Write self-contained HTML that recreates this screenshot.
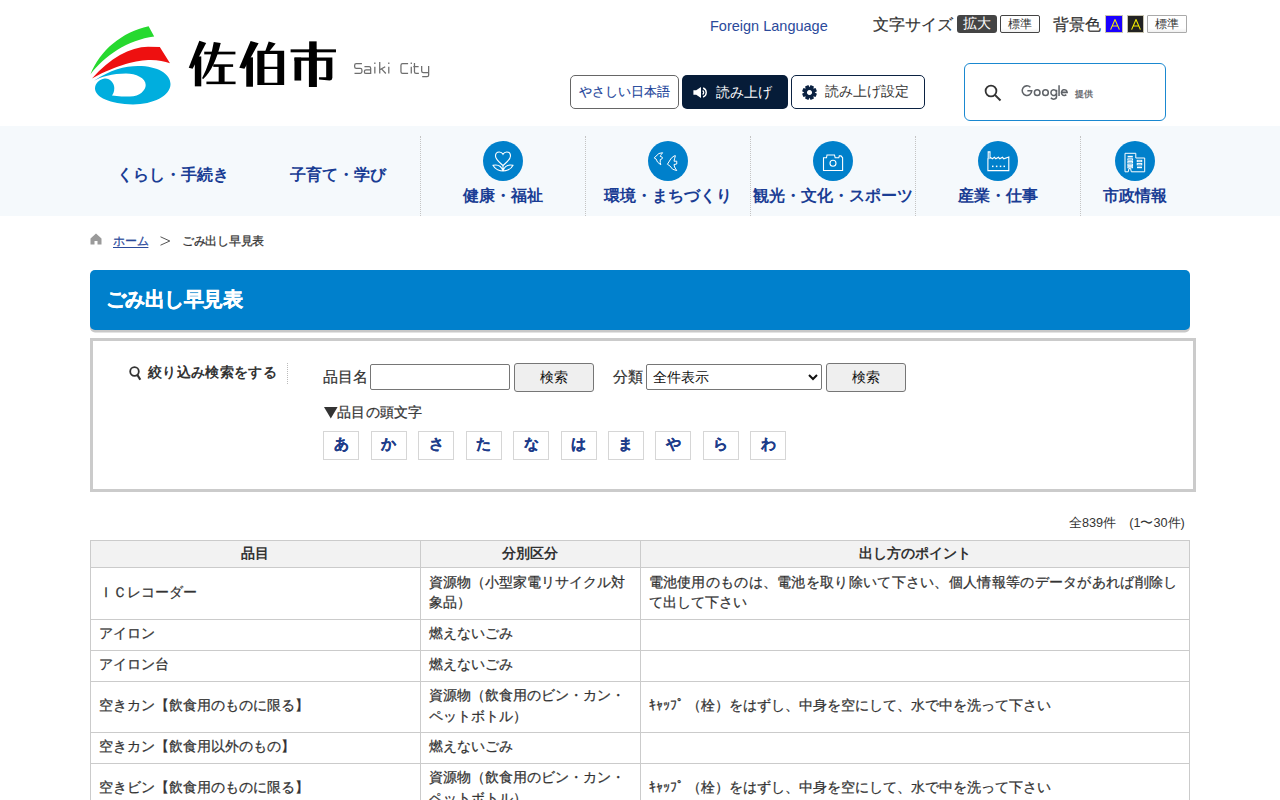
<!DOCTYPE html>
<html lang="ja">
<head>
<meta charset="utf-8">
<title>ごみ出し早見表 - 佐伯市</title>
<style>
*{box-sizing:border-box;margin:0;padding:0}
html,body{width:1280px;height:800px;overflow:hidden;background:#fff}
body{font-family:"Liberation Sans",sans-serif;color:#333;position:relative}
.abs{position:absolute}
.nowrap{white-space:nowrap}
/* header */
#logo{left:88px;top:22px;width:86px;height:86px}
#cityname{left:191px;top:37px;font-size:48px;font-weight:bold;color:#111;line-height:60px;letter-spacing:1px;transform:scaleY(0.92);transform-origin:0 0;-webkit-text-stroke:0.5px #111}
#saiki{left:354px;top:58px;font-size:16px;color:#777;letter-spacing:0.5px;line-height:20px}
#foreign{left:710px;top:17px;font-size:14.5px;color:#2b4a9b;line-height:18px}
#fsize{left:873px;top:15px;font-size:16px;color:#333;line-height:20px;-webkit-text-stroke:0.2px #333}
.tbtn{position:absolute;height:17.5px;font-size:12.5px;line-height:16px;text-align:center;border-radius:3px}
.btn1{left:570px;top:75px;width:109px;height:34px;border:1px solid #666;border-radius:5px;font-size:13px;color:#21439a;line-height:32px;text-align:center;-webkit-text-stroke:0.15px #21439a}
.btn2{left:682px;top:75px;width:106px;height:34px;background:#061c38;border-radius:5px;font-size:14px;color:#fff;line-height:34px}
.btn3{left:791px;top:75px;width:134px;height:34px;border:1.5px solid #0b2242;border-radius:5px;font-size:14px;color:#333;line-height:31px}
#gsearch{left:964px;top:63px;width:202px;height:58px;border:1.5px solid #1a88d0;border-radius:6px}
/* nav */
#nav{left:0;top:126px;width:1280px;height:90px;background:#f5f9fc}
.ncol{position:absolute;top:0;height:90px;text-align:center;color:#1a3d94;font-weight:bold;font-size:16px}
.ndiv{position:absolute;top:10px;height:80px;width:0;border-left:1px dotted #c4c4c4}
.ncirc{position:absolute;top:14.5px;left:50%;margin-left:-20px;width:40px;height:40px;border-radius:50%;background:#0080cb}
.nlab{position:absolute;left:0;right:0;top:58px;line-height:24px;white-space:nowrap}
.nlab2{position:absolute;left:0;right:0;top:37px;line-height:24px;white-space:nowrap}
/* breadcrumb */
#bc{left:90px;top:231px;font-size:12px;line-height:20px;color:#333;-webkit-text-stroke:0.25px}
/* title */
#title{left:90px;top:270px;width:1100px;height:60px;background:#0080cc;border-radius:5px;box-shadow:0 2.5px 0 #c8c8c8;color:#fff;font-size:19.8px;font-weight:bold;line-height:58px;padding-left:15.5px;letter-spacing:-0.5px;-webkit-text-stroke:0.4px #fff}
/* filter */
#filter{left:90px;top:338px;width:1106px;height:154px;border:3px solid #cbcbcb}
.lbl{position:absolute;font-size:14.5px;line-height:20px;color:#333;-webkit-text-stroke:0.25px #333}
.inp{position:absolute;border:1px solid #767676;border-radius:2px;background:#fff}
.fbtn{position:absolute;border:1px solid #767676;border-radius:3px;background:#efefef;font-size:14px;text-align:center;color:#111;line-height:26px}
.kana{position:absolute;top:431px;width:36px;height:29px;border:1px solid #d6d6d6;font-size:14.5px;font-weight:bold;color:#1d3c8a;text-align:center;line-height:24px;-webkit-text-stroke:0.2px #1d3c8a}
/* table */
#count{left:1069px;top:514px;font-size:12.7px;line-height:18px;color:#333;white-space:nowrap}
#tbl{position:absolute;left:90px;top:540px;width:1100px;border-collapse:collapse;font-size:14.3px;color:#333}
#tbl th,#tbl td{border:1px solid #cbcbcb;line-height:21px;vertical-align:middle}
#tbl th{background:#f2f2f2;font-weight:bold;text-align:center;height:27px;padding:0 0 2px;line-height:24px}
#tbl td{padding:2px 8px 5px;line-height:20.5px;-webkit-text-stroke:0.25px #333}
</style>
</head>
<body>
<!-- logo -->
<svg id="logo" class="abs" viewBox="88 22 86 86" width="86" height="86">
  <path fill="#26d92f" d="M90.4,74.6 C100,50 122,32 148.6,26.2 L154.2,36.6 C128,40 104,56 90.4,74.6 Z"/>
  <path fill="#ee1010" d="M92,78.5 C110,58 130,47 148,46.7 L159.8,47 L170,63.3 C155,58 132,57 92,78.5 Z"/>
  <path fill="#00aede" fill-rule="evenodd" d="M94,80.7 C110,70 125,66 138,66 C158,66 170.5,74 170.5,84 C170.5,96 153,104.4 133,104.4 C110,104.4 95,97 95,88.6 C95,83.5 99,79 104.7,78.4 C110,78 114.3,83 114.3,88 C114.3,92 113,94 112,95.5 C118,96.5 125,96.5 130,96.5 C140,96.5 145.7,90 145.7,85 C145.7,78 136,73.4 126,73.4 C113,73.4 100,77 94,80.7 Z"/>
</svg>
<svg class="abs" style="left:180px;top:30px" width="165" height="65" viewBox="0 0 1280 504"><g fill="#000">
<path d="M150,84 L203,100 L98,300 L68,292 Z"/>
<rect x="115" y="205" width="50" height="232"/>
<path d="M262,92 L316,100 Q268,300 178,382 L172,372 Q235,250 262,92 Z"/>
<rect x="188" y="168" width="242" height="21"/>
<rect x="258" y="266" width="154" height="20"/>
<rect x="300" y="276" width="46" height="136"/>
<rect x="205" y="400" width="226" height="20"/>
<path d="M548,86 L610,102 L500,300 L460,292 Z"/>
<rect x="514" y="212" width="52" height="228"/>
<path d="M688,90 L742,104 L690,168 L660,168 Z"/>
<path fill-rule="evenodd" d="M600,160 H808 V426 H600 Z M655,186 V284 H755 V186 Z M655,302 V410 H755 V302 Z"/>
<rect x="1002" y="88" width="58" height="70"/>
<rect x="858" y="150" width="352" height="23"/>
<rect x="888" y="214" width="52" height="178"/>
<path d="M888,214 H1182 V372 Q1180,392 1160,392 L1078,384 L1078,366 Q1120,368 1134,366 V238 H888 Z"/>
<rect x="1000" y="150" width="62" height="292"/>
</g></svg>
<svg class="abs" style="left:345px;top:52px" width="95" height="32" viewBox="0 0 1280 431"><g fill="none" stroke="#6e6e6e" stroke-width="17">
<path d="M228,156 H152 Q130,156 130,178 V198 Q130,220 152,220 H206 Q228,220 228,242 V264 Q228,287 206,287 H128"/>
<path d="M262,198 H325 Q346,198 346,220 V289 H284 Q262,289 262,268 V259 Q262,240 284,240 H346"/>
<path d="M402,198 V290 M402,140 V163"/>
<path d="M468,134 V290 M468,240 L542,198 M492,227 L550,290"/>
<path d="M590,198 V290 M590,140 V163"/>
<path d="M850,156 H776 Q754,156 754,178 V265 Q754,287 776,287 H850"/>
<path d="M893,198 V290 M893,140 V163"/>
<path d="M936,148 V266 Q936,287 958,287 H995 M920,198 H992"/>
<path d="M1033,190 V256 Q1033,278 1055,278 H1127 M1127,190 V312 Q1127,331 1105,331 H1040"/>
</g></svg>

<div id="foreign" class="abs nowrap">Foreign Language</div>
<div id="fsize" class="abs nowrap">文字サイズ</div>
<div class="tbtn" style="left:957px;top:15px;width:39.5px;background:#444;color:#fff;font-size:14px;line-height:17.5px">拡大</div>
<div class="tbtn" style="left:1000px;top:15px;width:39.5px;border:1px solid #444;background:linear-gradient(#fff 75%,#f0f0f0);border-radius:2px;color:#333;font-size:12px;line-height:16.5px">標準</div>
<div class="abs nowrap" style="left:1053px;top:15px;font-size:16px;line-height:20px;color:#333;-webkit-text-stroke:0.2px #333">背景色</div>
<div class="abs" style="left:1105px;top:15px;width:18px;height:17.5px;background:#1a00ff;border:1px solid #c8c4b0"><svg class="abs" style="left:3.5px;top:2.5px" width="10" height="11" viewBox="0 0 10 11"><path d="M0.6,10.6 L5,0.6 L9.4,10.6 M2.2,7 H7.8" fill="none" stroke="#f5ee00" stroke-width="1.1"/></svg></div>
<div class="abs" style="left:1126.5px;top:15px;width:17px;height:17.5px;background:#222;border:1px solid #c8c4b0"><svg class="abs" style="left:3px;top:2.5px" width="10" height="11" viewBox="0 0 10 11"><path d="M0.6,10.6 L5,0.6 L9.4,10.6 M2.2,7 H7.8" fill="none" stroke="#f5ee00" stroke-width="1.1"/></svg></div>
<div class="tbtn" style="left:1147px;top:15px;width:40px;height:17.5px;border:1px solid #aaa;background:linear-gradient(#fff 75%,#f0f0f0);color:#333;border-radius:1px;font-size:12px;line-height:16px">標準</div>

<div class="abs btn1 nowrap">やさしい日本語</div>
<div class="abs btn2 nowrap">
  <svg class="abs" style="left:11px;top:11px" width="16" height="13" viewBox="0 0 16 13"><path fill="#fff" d="M0.4,4.25 H3.2 L8,1 V12 L3.2,8.75 H0.4 Z"/><path fill="none" stroke="#fff" stroke-width="1.3" d="M9.6,4.6 A2.2,2.2 0 0,1 9.6,8.4"/><path fill="none" stroke="#fff" stroke-width="1.4" d="M10.1,2 A4.8,4.8 0 0,1 10.1,11"/></svg>
  <span class="abs" style="left:34px;top:0">読み上げ</span>
</div>
<div class="abs btn3 nowrap">
  <svg class="abs" style="left:10px;top:8.5px" width="15" height="15" viewBox="-8 -8 16 16"><g fill="#0b2242"><path d="M-1.9,-7.8 H1.9 L2.3,-4 H-2.3 Z" transform="rotate(22.5)"/><path d="M-1.9,-7.8 H1.9 L2.3,-4 H-2.3 Z" transform="rotate(67.5)"/><path d="M-1.9,-7.8 H1.9 L2.3,-4 H-2.3 Z" transform="rotate(112.5)"/><path d="M-1.9,-7.8 H1.9 L2.3,-4 H-2.3 Z" transform="rotate(157.5)"/><path d="M-1.9,-7.8 H1.9 L2.3,-4 H-2.3 Z" transform="rotate(202.5)"/><path d="M-1.9,-7.8 H1.9 L2.3,-4 H-2.3 Z" transform="rotate(247.5)"/><path d="M-1.9,-7.8 H1.9 L2.3,-4 H-2.3 Z" transform="rotate(292.5)"/><path d="M-1.9,-7.8 H1.9 L2.3,-4 H-2.3 Z" transform="rotate(337.5)"/><path fill-rule="evenodd" d="M0,-5.7 A5.7,5.7 0 1,1 -0.01,-5.7 Z M0,-2.7 A2.7,2.7 0 1,0 0.01,-2.7 Z"/></g></svg>
  <span class="abs" style="left:33px;top:0">読み上げ設定</span>
</div>
<div id="gsearch" class="abs">
  <svg class="abs" style="left:19px;top:19.5px" width="18" height="18" viewBox="0 0 18 18"><circle cx="7" cy="7" r="5.4" fill="none" stroke="#333" stroke-width="1.8"/><path d="M10.9,10.9 L16.5,16.5" stroke="#333" stroke-width="2"/></svg>
  <svg class="abs" style="left:49.5px;top:15.5px" width="60" height="24" viewBox="0 0 903 361"><g fill="none" stroke="#5f6368" stroke-width="23">
<path d="M232,110 A72,72 0 1,0 252,163 H186"/>
<circle cx="334" cy="190" r="42"/>
<circle cx="459" cy="190" r="42"/>
<path d="M625,190 A42,42 0 1,1 625,189.9 M625,145 V250 Q625,288 583,288 Q556,288 540,268"/>
<path d="M663,80 V241"/>
<path d="M700,186 H785 A43,43 0 1,0 772,220"/>
</g></svg>
  <span class="abs nowrap" style="left:109.5px;top:22.5px;font-size:9.2px;line-height:14px;color:#5f6368;-webkit-text-stroke:0.3px #5f6368">提供</span>
</div>

<!-- nav -->
<div id="nav" class="abs">
  <div class="ncol" style="left:90px;width:165px"><div class="nlab2">くらし・手続き</div></div>
  <div class="ncol" style="left:255px;width:165px"><div class="nlab2">子育て・学び</div></div>
  <div class="ndiv" style="left:420px"></div>
  <div class="ndiv" style="left:585px"></div>
  <div class="ndiv" style="left:750px"></div>
  <div class="ndiv" style="left:915px"></div>
  <div class="ndiv" style="left:1080px"></div>
  <div class="ncol" style="left:420px;width:165px">
    <div class="ncirc"><svg width="40" height="40" viewBox="0 0 40 40"><g fill="none" stroke="#fff" stroke-width="1.1"><path d="M20,24.5 C16,21 12.5,18.5 12.5,15 C12.5,12.5 14.3,11 16.3,11 C18,11 19.3,12 20,13.3 C20.7,12 22,11 23.7,11 C25.7,11 27.5,12.5 27.5,15 C27.5,18.5 24,21 20,24.5 Z"/><path d="M20,30 C17,30 12,28.5 10,24.3 C14.5,23.3 18.5,25 20,30 Z M20,30 C23,30 28,28.5 30,24.3 C25.5,23.3 21.5,25 20,30 Z M20,24.5 V30"/></g></svg></div>
    <div class="nlab">健康・福祉</div></div>
  <div class="ncol" style="left:585px;width:165px">
    <div class="ncirc"><svg width="40" height="40" viewBox="0 0 40 40"><g fill="none" stroke="#fff" stroke-width="1"><path stroke-linejoin="round" d="M6.2,16.9 L10.9,12.5 L14.6,11.7 L13.4,13.35 L12.5,14.7 L12.25,15.4 L14.3,16.2 L14.2,17.75 L12.25,18.6 L12.25,21.6 L12.8,23.8 L9.5,21.05 L8.1,18 Z"/><path stroke-linejoin="round" d="M19.4,23.25 L23.25,17.2 L26,15 L27.4,14.7 L26.55,17.75 L26,20.2 L28.75,20.2 L28.75,23 L26,23.5 L26.55,26 L28.75,29.6 L24.6,28.2 L21.9,24.9 Z"/></g></svg></div>
    <div class="nlab">環境・まちづくり</div></div>
  <div class="ncol" style="left:750px;width:165px">
    <div class="ncirc"><svg width="40" height="40" viewBox="0 0 40 40"><g fill="none" stroke="#fff" stroke-width="1.1"><path d="M10.5,29.5 V16.8 H13.5 L14,14 H21.5 L22.2,16.8 H25.8 L26.3,14.9 H28 L29.6,16.8 V29.5 Z"/><circle cx="20" cy="22.2" r="3"/></g></svg></div>
    <div class="nlab">観光・文化・スポーツ</div></div>
  <div class="ncol" style="left:915px;width:165px">
    <div class="ncirc"><svg width="40" height="40" viewBox="0 0 40 40"><g fill="none" stroke="#fff" stroke-width="1.1"><path d="M9.9,29.6 V17.8 H10.2 V10.9 H12 V17.2 L12.8,16.6 L14.3,17.8 L16.5,16.3 L17.8,17.8 L20.5,16.3 L21.8,17.8 L24.5,16.3 L25.8,17.8 L30.8,16 V29.6 Z"/></g><g fill="#fff"><rect x="14" y="24.6" width="1.5" height="1.5"/><rect x="17.9" y="24.6" width="1.5" height="1.5"/><rect x="21.8" y="24.6" width="1.5" height="1.5"/><rect x="25.5" y="24.6" width="1.5" height="1.5"/></g></svg></div>
    <div class="nlab">産業・仕事</div></div>
  <div class="ncol" style="left:1080px;width:110px">
    <div class="ncirc"><svg width="40" height="40" viewBox="0 0 40 40"><g fill="none" stroke="#fff" stroke-width="1"><path d="M10,30.8 V12.3 H20.8 V17 H29.7 V30.8 H16.3 L15.6,27.6 H13.9 L13.3,30.8 Z"/></g><g fill="#fff"><rect x="12.6" y="14.8" width="5.2" height="1.6"/></g><g fill="none" stroke="#fff" stroke-width="0.9"><rect x="12.8" y="17.8" width="4.8" height="1.4"/><rect x="12.8" y="20.5" width="4.8" height="1.4"/><rect x="12.8" y="23.2" width="4.8" height="1.4"/><rect x="12.8" y="25.6" width="4.8" height="1.2"/><rect x="22.2" y="19.3" width="4.6" height="1.4"/><rect x="22.2" y="22.5" width="4.6" height="1.4"/></g><rect x="22" y="25.6" width="5" height="1.6" fill="#fff"/></svg></div>
    <div class="nlab">市政情報</div></div>
</div>

<!-- breadcrumb -->
<svg class="abs" style="left:90px;top:233px" width="12" height="12" viewBox="0 0 12 12"><path fill="#9a9a9a" d="M6,0.5 L11.5,5.5 V11.5 H7.5 V8 H4.5 V11.5 H0.5 V5.5 Z"/></svg>
<div id="bc" class="abs nowrap"><span class="abs" style="left:23px;top:0;color:#2b4a9b;text-decoration:underline;text-underline-offset:1.5px;letter-spacing:-0.2px">ホーム</span><svg class="abs" style="left:70px;top:5px" width="11" height="10" viewBox="0 0 11 10"><path d="M0.5,0.8 L9.8,5 L0.5,9.2" fill="none" stroke="#555" stroke-width="1"/></svg><span class="abs" style="left:92px;top:0;letter-spacing:-0.3px">ごみ出し早見表</span></div>

<!-- title -->
<div id="title" class="abs nowrap">ごみ出し早見表</div>

<!-- filter -->
<div id="filter" class="abs"></div>
<svg class="abs" style="left:129px;top:366px" width="13" height="15" viewBox="0 0 13 15"><circle cx="5.5" cy="5.5" r="4.3" fill="none" stroke="#333" stroke-width="1.8"/><path d="M8.3,8.8 L11.3,13.8" stroke="#333" stroke-width="2.2"/></svg>
<div class="abs nowrap" style="left:148px;top:362px;font-size:14px;line-height:20px;font-weight:bold;color:#333;letter-spacing:0.35px">絞り込み検索をする</div>
<div class="abs" style="left:287px;top:363px;height:21px;border-left:1px dotted #bbb"></div>
<div class="lbl nowrap" style="left:323px;top:367px">品目名</div>
<div class="inp" style="left:370px;top:364px;width:140px;height:26px"></div>
<div class="fbtn" style="left:514px;top:363px;width:80px;height:29px">検索</div>
<div class="lbl nowrap" style="left:613px;top:367px">分類</div>
<div class="inp" style="left:646px;top:364px;width:176px;height:26px"><span class="abs nowrap" style="left:6px;top:2px;font-size:14px;line-height:20px;color:#111">全件表示</span><svg class="abs" style="left:161px;top:9px" width="10" height="7" viewBox="0 0 10 7"><path d="M1,1 L5,5 L9,1" fill="none" stroke="#111" stroke-width="2"/></svg></div>
<div class="fbtn" style="left:826px;top:363px;width:80px;height:29px">検索</div>
<svg class="abs" style="left:323.5px;top:406.5px" width="14" height="12" viewBox="0 0 14 12"><path d="M0,0 H13.6 L6.8,11.4 Z" fill="#333"/></svg><div class="lbl nowrap" style="left:337px;top:402px;font-size:14px;letter-spacing:0.3px">品目の頭文字</div>
<div class="kana" style="left:323px">あ</div>
<div class="kana" style="left:370.5px">か</div>
<div class="kana" style="left:418px">さ</div>
<div class="kana" style="left:465.5px">た</div>
<div class="kana" style="left:513px">な</div>
<div class="kana" style="left:560.5px">は</div>
<div class="kana" style="left:607.5px">ま</div>
<div class="kana" style="left:655px">や</div>
<div class="kana" style="left:702.5px">ら</div>
<div class="kana" style="left:750px">わ</div>

<!-- table -->
<div id="count" class="abs">全839件　(1〜30件)</div>
<table id="tbl">
<colgroup><col style="width:330px"><col style="width:220px"><col style="width:550px"></colgroup>
<tr><th>品目</th><th>分別区分</th><th>出し方のポイント</th></tr>
<tr style="height:52px"><td>ＩＣレコーダー</td><td>資源物（小型家電リサイクル対象品）</td><td><span style="letter-spacing:0.3px">電池使用のものは、電池を取り除いて下さい、個人情報等のデータがあれば削除し</span><br>て出して下さい</td></tr>
<tr style="height:31px"><td>アイロン</td><td>燃えないごみ</td><td></td></tr>
<tr style="height:31px"><td>アイロン台</td><td>燃えないごみ</td><td></td></tr>
<tr style="height:51px"><td>空きカン【飲食用のものに限る】</td><td>資源物（飲食用のビン・カン・ペットボトル）</td><td>ｷｬｯﾌﾟ<span style="margin-left:3px"></span>（栓）をはずし、中身を空にして、水で中を洗って下さい</td></tr>
<tr style="height:31px"><td>空きカン【飲食用以外のもの】</td><td>燃えないごみ</td><td></td></tr>
<tr style="height:51px"><td>空きビン【飲食用のものに限る】</td><td>資源物（飲食用のビン・カン・ペットボトル）</td><td>ｷｬｯﾌﾟ<span style="margin-left:3px"></span>（栓）をはずし、中身を空にして、水で中を洗って下さい</td></tr>
<tr style="height:31px"><td>空きビン【飲食用以外のもの】</td><td>燃えないごみ</td><td></td></tr>
</table>
</body>
</html>
